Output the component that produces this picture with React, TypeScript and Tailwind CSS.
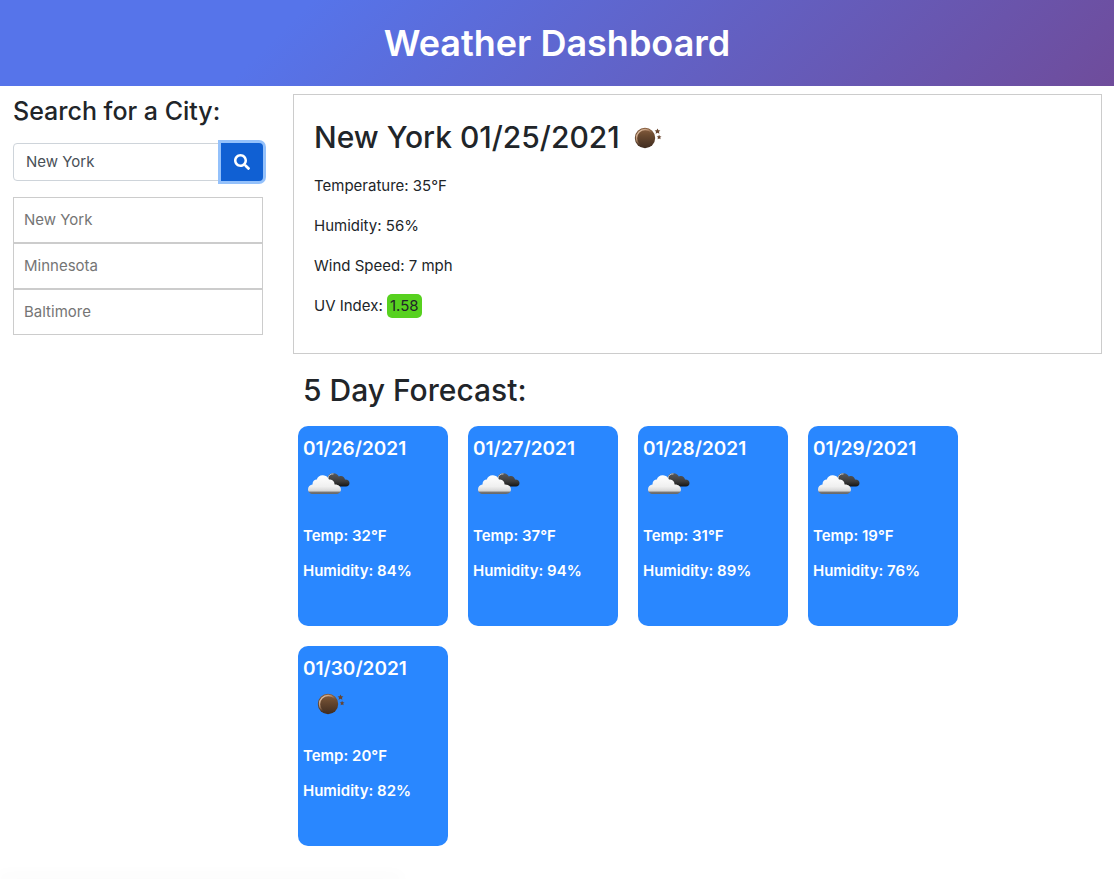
import { useId, useState } from "react";

type IconKind = "clouds" | "dust";

const forecast: { date: string; icon: IconKind; temp: number; humidity: number }[] = [
  { date: "01/26/2021", icon: "clouds", temp: 32, humidity: 84 },
  { date: "01/27/2021", icon: "clouds", temp: 37, humidity: 94 },
  { date: "01/28/2021", icon: "clouds", temp: 31, humidity: 89 },
  { date: "01/29/2021", icon: "clouds", temp: 19, humidity: 76 },
  { date: "01/30/2021", icon: "dust", temp: 20, humidity: 82 },
];

const history = ["New York", "Minnesota", "Baltimore"];

function WeatherIcon({ kind }: { kind: IconKind }) {
  const id = useId();
  if (kind === "dust") {
    return (
      <svg viewBox="0 0 50 50" className="size-[50px]" role="img" aria-label="Clear night">
        <defs>
          <linearGradient id={`${id}b`} x1="0" y1="0" x2="0" y2="1">
            <stop offset="0" stopColor="#8a6040" />
            <stop offset="0.35" stopColor="#6b4a30" />
            <stop offset="1" stopColor="#3f2c20" />
          </linearGradient>
          <linearGradient id={`${id}r`} x1="0" y1="0" x2="0.7" y2="0.8">
            <stop offset="0" stopColor="#f3d9c0" />
            <stop offset="0.45" stopColor="#b58c6c" />
            <stop offset="0.8" stopColor="#5a3e2a" stopOpacity="0" />
          </linearGradient>
        </defs>
        <circle cx="25" cy="26" r="10.2" fill={`url(#${id}b)`} />
        <circle cx="25.2" cy="26.2" r="8.7" fill="none" stroke={`url(#${id}r)`} strokeWidth="1.4" />
        <path d="M37.500 16.500l.9 1.800 2 .2-1.500 1.300.5 2-1.900-1.100-1.900 1.100.5-2-1.500-1.300 2-.2z" fill="#68452f" />
        <path d="M39.100 22.800l.7 1.500 1.700.2-1.300 1.100.4 1.700-1.500-.9-1.500.9.4-1.700-1.300-1.100 1.700-.2z" fill="#68452f" />
      </svg>
    );
  }
  return (
    <svg viewBox="0 0 50 50" className="size-[50px]" role="img" aria-label="Broken clouds">
      <defs>
        <linearGradient id={`${id}d`} x1="0" y1="0" x2="0" y2="1">
          <stop offset="0" stopColor="#5a5a5a" />
          <stop offset="0.6" stopColor="#3c3c3c" />
          <stop offset="1" stopColor="#151515" />
        </linearGradient>
        <linearGradient id={`${id}w`} x1="0" y1="0" x2="0" y2="1">
          <stop offset="0" stopColor="#ffffff" />
          <stop offset="0.6" stopColor="#f0f0f0" />
          <stop offset="0.84" stopColor="#d6d6d6" />
          <stop offset="0.9" stopColor="#777777" />
          <stop offset="1" stopColor="#666666" />
        </linearGradient>
      </defs>
      <path d="M29 28.500C25 27 23 23 24.500 19.500C25.500 16.500 28 15 30.500 15.200C33 15.400 35 16.500 35.800 18.500C39 17.200 41.200 18.500 42 21.500C44.800 21.300 46.500 23 46.500 25C46.500 27.200 45 28.500 43 28.500Z" fill={`url(#${id}d)`} />
      <path d="M25 20.500C25 17.500 27.500 15.700 30.500 15.900" fill="none" stroke="#c8c8c8" strokeWidth="1" />
      <path d="M10 36C7 36 5 34 5 31.200C5 28.500 7 26.500 9.500 26.400C9.500 23.500 11.500 21.500 13.800 21.600C14.500 18.800 17 17 20 17.200C23 17.400 25.200 19 26 21.600C29 20.700 31.500 23 31.600 26.500C35 26.200 38 28.500 38 31.400C38 34 36 36 33 36Z" fill={`url(#${id}w)`} />
    </svg>
  );
}

export default function App() {
  const [city, setCity] = useState("New York");
  return (
    <div className="flex min-h-screen flex-col bg-white font-[Inter,'Liberation_Sans',sans-serif] text-[15px] leading-6 text-[#212529]">
      <header className="bg-[linear-gradient(315deg,#6f4c9b_0%,#5674ea_74%)] py-[19px] text-center text-white">
        <h1 className="text-[36px] leading-[48px] font-semibold">Weather Dashboard</h1>
      </header>

      <div className="flex gap-[30px] pt-2 pr-3 pl-[13px]">
        <aside className="w-[250px] shrink-0">
          <h2 className="mb-[15px] text-[25px] leading-[34px] font-medium whitespace-nowrap">
            <label htmlFor="city">Search for a City:</label>
          </h2>
          <form className="flex h-[38px]" onSubmit={(e) => e.preventDefault()}>
            <input
              id="city"
              type="text"
              value={city}
              onChange={(e) => setCity(e.target.value)}
              className="min-w-0 flex-1 rounded-l border border-[#ced4da] px-3 text-[#495057] outline-none"
            />
            <button
              type="submit"
              aria-label="Search"
              className="-ml-px flex w-[42px] items-center justify-center rounded-r bg-[#1060d3] text-white shadow-[0_0_0_3px_#94c1fb]"
            >
              <svg viewBox="0 0 512 512" className="size-4" fill="currentColor" aria-hidden="true">
                <path d="M505 442.700L405.300 343c-4.500-4.500-10.600-7-17-7H372c27.600-35.300 44-79.700 44-128C416 93.100 322.900 0 208 0S0 93.100 0 208s93.100 208 208 208c48.300 0 92.700-16.400 128-44v16.300c0 6.400 2.500 12.500 7 17l99.700 99.700c9.400 9.400 24.600 9.400 33.900 0l28.300-28.300c9.400-9.400 9.400-24.600.1-34zM208 336c-70.700 0-128-57.200-128-128 0-70.700 57.200-128 128-128 70.700 0 128 57.200 128 128 0 70.700-57.200 128-128 128z" />
              </svg>
            </button>
          </form>
          <ul className="mt-4">
            {history.map((name) => (
              <li key={name}>
                <button
                  type="button"
                  onClick={() => setCity(name)}
                  className="block h-[46px] w-full border border-[#cccccc] px-[10px] text-left text-[#757575]"
                >
                  {name}
                </button>
              </li>
            ))}
          </ul>
        </aside>

        <main className="min-w-0 flex-1">
          <section className="border border-[#cccccc] px-5 pt-[17px] pb-[35px]">
            <div className="flex items-center">
              <h2 className="text-[30px] leading-[50px] font-medium">New York 01/25/2021</h2>
              <WeatherIcon kind="dust" />
            </div>
            <div className="mt-3 flex flex-col gap-4">
              <p>Temperature: 35°F</p>
              <p>Humidity: 56%</p>
              <p>Wind Speed: 7 mph</p>
              <p>
                UV Index: <span className="inline-block rounded-[5px] bg-[#57d11f] px-[3px]">1.58</span>
              </p>
            </div>
          </section>

          <h2 className="mt-4 pl-[10px] text-[30px] leading-10 font-medium">5 Day Forecast:</h2>
          <div className="mt-4 flex flex-wrap gap-5 pb-8 pl-[5px]">
            {forecast.map((day) => (
              <article
                key={day.date}
                className="h-[200px] w-[150px] rounded-[10px] bg-[#2987ff] p-[5px] font-semibold text-white"
              >
                <h3 className="mt-[9px] text-[19px] leading-[18px]">{day.date}</h3>
                <WeatherIcon kind={day.icon} />
                <p className="mt-4">Temp: {day.temp}°F</p>
                <p className="mt-[11px]">Humidity: {day.humidity}%</p>
              </article>
            ))}
          </div>
        </main>
      </div>

      {/* soft shade along the lower left edge of the window */}
      <div
        aria-hidden="true"
        className="pointer-events-none fixed bottom-0 left-0 h-0 w-[400px] shadow-[0_0_16px_2px_rgba(0,0,0,0.06)]"
      />
    </div>
  );
}
